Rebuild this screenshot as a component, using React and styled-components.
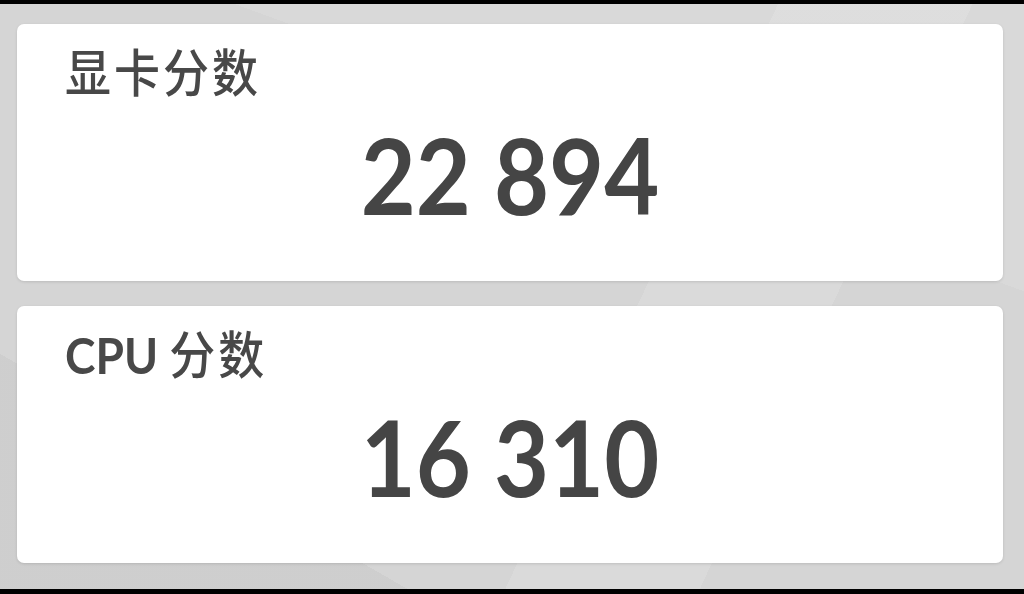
import styled, { createGlobalStyle } from "styled-components";

const GlobalStyle = createGlobalStyle`
  html, body {
    margin: 0;
    padding: 0;
    background: #000;
  }
  * {
    box-sizing: border-box;
  }
`;

const scores = [
  { tag: "", label: "显卡分数", value: "22 894" },
  { tag: "CPU", label: "分数", value: "16 310" },
];

const App = () => {
  return (
    <>
      <GlobalStyle />
      <Frame>
        <Backdrop>
          {scores.map((s) => (
            <ScoreCard key={s.value}>
              <Label>
                {s.tag && <Tag>{s.tag} </Tag>}
                {s.label}
              </Label>
              <Value>{s.value}</Value>
            </ScoreCard>
          ))}
        </Backdrop>
      </Frame>
    </>
  );
};

export default App;

const Frame = styled.div`
  width: 1024px;
  height: 594px;
  padding: 4px 0 5px 0;
  background: #000;
`;

const Backdrop = styled.div`
  height: 100%;
  display: flex;
  flex-direction: column;
  gap: 25px;
  padding: 20px 21px 0 17px;
  background-color: #d5d5d5;
  background-image:
    linear-gradient(115deg, transparent 0 60%, rgba(255, 255, 255, 0.12) 60% 75%, transparent 75%),
    linear-gradient(200deg, rgba(255, 255, 255, 0.1) 0 30%, transparent 30%),
    linear-gradient(30deg, rgba(0, 0, 0, 0.03) 0 20%, transparent 20%);
`;

const ScoreCard = styled.div`
  height: 257px;
  background: #fff;
  border-radius: 7px;
  box-shadow: 0 1px 3px rgba(0, 0, 0, 0.12);
  padding: 22px 0 0 48px;
  display: flex;
  flex-direction: column;
  align-items: flex-start;
`;

const Label = styled.div`
  font-family: Lato, "Noto Sans CJK SC", sans-serif;
  font-size: 46px;
  font-weight: 500;
  letter-spacing: 3px;
  line-height: 1.1;
  color: #484848;
  transform: scaleY(1.1);
  transform-origin: top left;
`;

const Tag = styled.span`
  font-weight: 700;
  letter-spacing: 0;
`;

const Value = styled.div`
  align-self: stretch;
  margin: 26px 0 0 -48px;
  text-align: center;
  font-family: Lato, "Noto Sans CJK SC", sans-serif;
  font-size: 95px;
  font-weight: 700;
  line-height: 1;
  color: #454545;
  transform: scaleY(1.1);
  transform-origin: top center;
`;
